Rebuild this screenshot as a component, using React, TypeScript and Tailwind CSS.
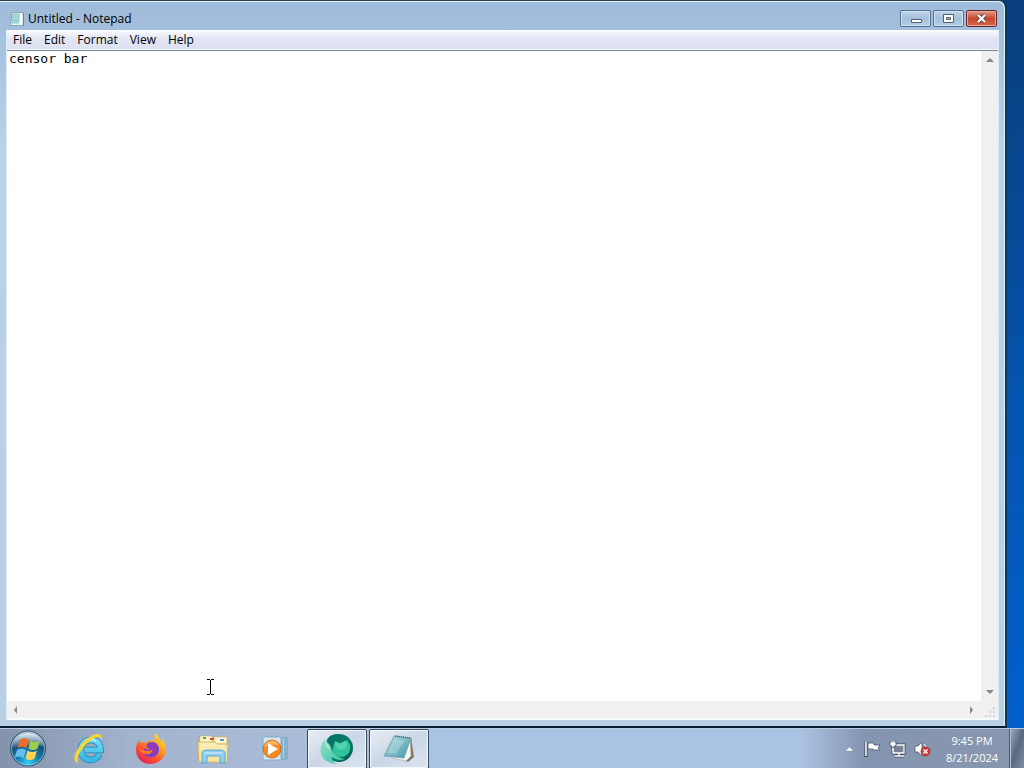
import type { ReactNode } from "react";

const menus = ["File", "Edit", "Format", "View", "Help"];

function NotepadGlyph() {
  return (
    <svg width="16" height="16" viewBox="0 0 16 16" aria-hidden="true">
      <path d="M3 1.500h11v13H1.500z" fill="#eaf4f4" stroke="#7d99a5" strokeWidth=".8" />
      <path d="M3.500 2.500h7.500L10 12.500H2.500z" fill="#96cdd0" />
      <path d="M11.500 2.500h2v11h-2z" fill="#fff" />
      <path d="M14.500 2v13" stroke="#71848d" />
      <path d="M4 5h6M4 7.500h5.500M3.500 10h6" stroke="#b9e2e1" strokeWidth=".8" />
    </svg>
  );
}

function StartOrb() {
  return (
    <svg width="40" height="40" viewBox="0 0 40 40" aria-hidden="true">
      <defs>
        <radialGradient id="orb" cx=".5" cy=".9" r=".85">
          <stop offset="0" stopColor="#31d0f4" />
          <stop offset=".38" stopColor="#147bb0" />
          <stop offset=".72" stopColor="#174b77" />
          <stop offset="1" stopColor="#8eacc2" />
        </radialGradient>
        <linearGradient id="orbShine" x1="0" y1="0" x2="0" y2="1">
          <stop offset="0" stopColor="#fff" stopOpacity=".75" />
          <stop offset="1" stopColor="#fff" stopOpacity=".08" />
        </linearGradient>
      </defs>
      <circle cx="20" cy="19.500" r="17.500" fill="url(#orb)" stroke="#304e69" />
      <circle cx="20" cy="19.500" r="16.500" fill="none" stroke="#c0dcec" strokeOpacity=".65" />
      <path d="M4 19C5 9 12 4 20 4s15 5 16 14c-9-3-20-3-32 1z" fill="url(#orbShine)" />
      <path d="M12 11c3-2.500 6-2 9 0l-2.500 8c-3-2-6-2-9 0z" fill="#ef692b" />
      <path d="M22.500 11.500c3 2 6 2 9.500 0l-2.500 8c-3 2-6 2-9 0z" fill="#9bd04c" />
      <path d="M9 21c3-2 6-2 9 0l-2.500 8c-3-2-6-2-9 0z" fill="#65bfee" />
      <path d="M19.500 21.500c3 2 6 2 9.500 0l-2.500 8c-3 2-6 2-9 0z" fill="#ffd34d" />
    </svg>
  );
}

function ExplorerE() {
  return (
    <svg width="34" height="34" viewBox="0 0 34 34" aria-hidden="true">
      <defs>
        <linearGradient id="ie" x1="0" y1="0" x2="0" y2="1">
          <stop offset="0" stopColor="#72daf8" />
          <stop offset="1" stopColor="#35b9e4" />
        </linearGradient>
      </defs>
      <path d="M27.500 22c-2 4-5 6-8.500 6-6 0-10-4-10-10S13 8 19 8s9.500 4 9.500 10H13" fill="none" stroke="#2382b2" strokeWidth="6.500" />
      <path d="M27.500 22c-2 4-5 6-8.500 6-6 0-10-4-10-10S13 8 19 8s9.500 4 9.500 10H13" fill="none" stroke="url(#ie)" strokeWidth="5" />
      <path d="M13 9c3-2 8-2 11 0" fill="none" stroke="#c6f3fd" strokeWidth="1.500" />
      <path d="M5 30C-1 27 7 13 17 6c6-4 12-5 12 0-2-3-7-1-11 2C10 14 4 23 5 30z" fill="#f5d831" stroke="#f5d831" strokeWidth="1.200" />
    </svg>
  );
}

function FirefoxLogo() {
  return (
    <svg width="34" height="34" viewBox="0 0 34 34" aria-hidden="true">
      <defs>
        <linearGradient id="fox" x1=".9" y1="0" x2=".2" y2="1">
          <stop offset="0" stopColor="#ffed3e" />
          <stop offset=".4" stopColor="#ff9b20" />
          <stop offset=".7" stopColor="#ff4c35" />
          <stop offset="1" stopColor="#df225e" />
        </linearGradient>
      </defs>
      <path d="M21 1c4 3 4 6 7 9 0-2 0-3-1-4 5 5 6 11 4 16-2 6-8 10-15 10C8 32 2 26 2 18c0-4 1-8 4-11v4c2-1 4-1 6 0 2-2 5-3 9-3-1-2-1-5 0-7z" fill="url(#fox)" />
      <path d="M14 11c6-3 11 1 11 6 0 6-5 9-10 8-5-1-7-5-4-9 1 2 4 2 5 1-3-1-5-3-2-6z" fill="#7542c9" />
      <path d="M4 17c4 0 5 2 9 2 3 0 5-2 7-1-1 4-5 5-8 4-3 0-5-2-8-5z" fill="#ff791f" />
      <path d="M15 12c4-1 7 1 7 5 0 3-3 5-6 5 4-4 3-7-1-10z" fill="#a632aa" />
    </svg>
  );
}

function FolderLogo() {
  return (
    <svg width="34" height="34" viewBox="0 0 34 34" aria-hidden="true">
      <path d="M3 5h12l2 2h14v21H3z" fill="#edd27a" stroke="#b8983e" strokeWidth=".8" />
      <path d="M4 4h12v7H4zM18 5h13v7H18z" fill="#fff5c7" stroke="#cdb46a" strokeWidth=".6" />
      <path d="M7 5h3v2H7z" fill="#49a75c" /><path d="M14 6h4v2h-4z" fill="#d74a39" /><path d="M24 7h4v2h-4z" fill="#4e9dd0" />
      <path d="M2 10h17l2 2h11l-1 18H3z" fill="#f8e59d" stroke="#d0b25a" strokeWidth=".8" />
      <path d="M4 12h15M4 14h25M4 17h25" stroke="#fff8d4" />
      <path d="M6 31V21c0-2 2-3 4-3h15c2 0 4 1 4 3v10h-5v-7H11v7z" fill="#90cfee" stroke="#4c9dcc" strokeWidth=".8" />
      <path d="M8 21h18" stroke="#d7f2fc" />
    </svg>
  );
}

function MediaLogo() {
  return (
    <svg width="30" height="30" viewBox="0 0 30 30" aria-hidden="true">
      <path d="M8 4h19v21H8z" fill="#b8d8e7" stroke="#6797b5" />
      <path d="M22 5v19M25 5v19" stroke="#4b8bb5" />
      <path d="M3 3h18v23H3z" fill="#d4e8f2" stroke="#83adc2" />
      <circle cx="12" cy="15" r="9" fill="#f58b22" stroke="#d46b15" />
      <path d="M4 13a8 8 0 0 1 15-2c-5-1-10-1-15 2z" fill="#ffbd68" opacity=".8" />
      <path d="m8 9 10 6-10 6z" fill="#fff" />
    </svg>
  );
}

function GreenLogo() {
  return (
    <svg width="36" height="36" viewBox="0 0 36 36" aria-hidden="true">
      <defs>
        <linearGradient id="globe" x1="0" y1="0" x2="1" y2="1">
          <stop stopColor="#087064" /><stop offset=".6" stopColor="#087b6b" /><stop offset="1" stopColor="#044c45" />
        </linearGradient>
        <linearGradient id="mint" x1="0" y1="0" x2="1" y2="1"><stop stopColor="#93dfc9" /><stop offset="1" stopColor="#30c5a0" /></linearGradient>
      </defs>
      <circle cx="20" cy="17" r="14" fill="url(#globe)" />
      <path d="M8 7C0 12 0 23 5 28c3 3 7 4 12 5-3-2-4-4-4-7 4 3 9 4 13 2-6-1-11-4-13-9-2-4-3-7-2-11z" fill="url(#mint)" />
      <path d="m16 10 5 2 7-3 3 5c1 6-2 11-8 12-6 0-10-4-9-9z" fill="#31c49d" />
      <path d="M7 10c3-5 8-8 14-6l3 4-4 3-5-2-2 7-4-4z" fill="#087366" />
      <path d="m16 11 5 2 6-3c2 4 0 8-4 9-4 0-7-3-7-8z" fill="#78dfc2" opacity=".5" />
      <path d="M8 7c-2 4-1 8 3 11" fill="none" stroke="#b8ead8" strokeWidth="1.500" />
    </svg>
  );
}

function LargeNotepad() {
  return (
    <svg width="34" height="34" viewBox="0 0 34 34" aria-hidden="true">
      <defs><linearGradient id="pad" x1="0" y1="0" x2="1" y2="1"><stop stopColor="#b9e0e5" /><stop offset=".55" stopColor="#75b6c3" /><stop offset="1" stopColor="#4896a9" /></linearGradient></defs>
      <path d="m29 5 3 20-6 5-6-3z" fill="#817969" />
      <path d="m28 5 1 19-5 5-14-3 2-3z" fill="#f6f5ed" stroke="#a7adab" strokeWidth=".6" />
      <path d="M12 4 29 6l-7 20L2 24z" fill="url(#pad)" stroke="#699ba5" strokeWidth=".7" />
      <path d="m13 4 15 2" stroke="#59666b" strokeWidth="1.500" strokeDasharray="1 1" />
      <path d="m13 7 10 1-9 14-9-1z" fill="#d8f2f2" opacity=".3" />
    </svg>
  );
}

function TaskButton({ label, active = false, children }: { label: string; active?: boolean; children: ReactNode }) {
  return (
    <button aria-label={label} className={active
      ? "flex h-10 w-15 items-center justify-center rounded-xs border border-[#354a61] bg-linear-to-br from-[#e9edf4] via-[#cbd7e6] to-[#dce5f0] shadow-[inset_0_0_0_1px_#f4f8fc]"
      : "flex h-10 w-15 items-center justify-center"}>
      {children}
    </button>
  );
}

function Arrow({ direction }: { direction: "up" | "down" | "left" | "right" }) {
  const paths = { up: "M0 6 4 2l4 4z", down: "M0 2h8L4 6z", left: "M5 0v8L2 4z", right: "M2 0l3 4-3 4z" };
  return <svg width="8" height="8" viewBox="0 0 8 8" aria-hidden="true"><path d={paths[direction]} fill="#85878c" /></svg>;
}

const captionButton = "flex h-[17px] w-[31px] items-center justify-center rounded-xs border border-[#52708f] bg-linear-to-b from-[#bfd3e8] via-[#a4bfdb] to-[#b5d0e8] shadow-[inset_0_0_0_1px_#d3e3f1]";

export default function App() {
  return (
    <div className="relative flex h-screen flex-col overflow-hidden bg-linear-to-b from-[#083e7b] via-[#0453ad] via-50% to-[#0261d0] font-['Open_Sans','Noto_Sans',sans-serif] text-xs text-black">
      <main className="mr-[17px] flex min-h-0 flex-1 flex-col rounded-tr-lg border-t border-r-2 border-b-2 border-t-[#343b4a] border-r-[#173451] border-b-[#0b1d30] bg-linear-to-b from-[#9fbbda] via-[#b9d1ea] via-20% to-[#b9cfe4] pr-[6px] pb-[6px] pl-[6px] shadow-[inset_-1px_1px_0_#d5f5ff]">
        <header className="flex h-[29px] shrink-0 items-center pt-[6px] pr-[2px] pl-[3px]">
          <NotepadGlyph />
          <h1 className="ml-[3px] flex-1 text-xs leading-4">Untitled - Notepad</h1>
          <div className="flex gap-[2px]">
            <button aria-label="Minimize" className={captionButton}>
              <svg width="14" height="10" viewBox="0 0 14 10"><path d="M2.500 5.500h10v3h-10z" fill="#fff" stroke="#53606e" /></svg>
            </button>
            <button aria-label="Restore" className={captionButton}>
              <svg width="13" height="11" viewBox="0 0 13 11"><path d="M1.500 1.500h10v8h-10zM4.500 4.500v2h4v-2z" fill="#fff" fillRule="evenodd" stroke="#53606e" /></svg>
            </button>
            <button aria-label="Close" className="flex h-[17px] w-[31px] items-center justify-center rounded-xs border border-[#61262c] bg-linear-to-b from-[#e09a88] via-[#c9462f] to-[#d5664e] shadow-[inset_0_0_0_1px_#e7aa99]">
              <svg width="13" height="11" viewBox="0 0 13 11"><path d="m3 2 7 7m0-7L3 9" stroke="#65434b" strokeWidth="4" /><path d="m3 2 7 7m0-7L3 9" stroke="#fff" strokeWidth="2.200" /></svg>
            </button>
          </div>
        </header>
        <section className="flex min-h-0 flex-1 flex-col border-r border-l border-[#dceef9] bg-white">
          <nav className="flex h-5 shrink-0 items-center bg-linear-to-b from-[#fcfdff] via-[#e3e7f4] via-40% to-[#dce1f1] shadow-[inset_0_-1px_0_#f6f8fe]">
            {menus.map((item) => <button key={item} className="px-[6px] leading-5">{item}</button>)}
          </nav>
          <div className="flex min-h-0 flex-1 border-t border-[#72869e]">
            <textarea aria-label="Text editor" spellCheck={false} wrap="off" defaultValue="censor bar" className="min-w-0 flex-1 resize-none overflow-hidden bg-white px-[2px] font-['DejaVu_Sans_Mono','Liberation_Mono',monospace] text-[13px] leading-4 outline-none" />
            <div className="flex w-[17px] shrink-0 flex-col items-center justify-between bg-[#f1f0f1] py-[5px]">
              <button aria-label="Scroll up"><Arrow direction="up" /></button>
              <button aria-label="Scroll down"><Arrow direction="down" /></button>
            </div>
          </div>
          <div className="flex h-[17px] shrink-0 items-center bg-[#f2eff0]">
            <div className="flex flex-1 items-center justify-between px-[5px]">
              <button aria-label="Scroll left"><Arrow direction="left" /></button>
              <button aria-label="Scroll right"><Arrow direction="right" /></button>
            </div>
            <svg width="17" height="17" viewBox="0 0 17 17" aria-hidden="true"><path d="M12 6h2v2h-2zM8 10h2v2H8zM12 10h2v2h-2zM4 14h2v2H4zM8 14h2v2H8zM12 14h2v2h-2z" fill="#d5d9dd" /></svg>
          </div>
          <div className="h-[2px] shrink-0 bg-[#f2fbff]" />
        </section>
      </main>

      <footer className="flex h-10 shrink-0 items-stretch border-t border-[#b9cbdf] bg-linear-to-r from-[#8494ad] via-[#a8bfdf] via-25% to-[#a9c2df]">
        <div className="flex items-center gap-[2px] bg-linear-to-r from-[#8393ac] via-[#a2b3cd] via-30% to-[#afc3df] px-px">
          <button aria-label="Start" className="flex h-10 w-14 items-center justify-center pr-[2px]"><StartOrb /></button>
          <TaskButton label="Internet Explorer"><ExplorerE /></TaskButton>
          <TaskButton label="Firefox"><FirefoxLogo /></TaskButton>
          <TaskButton label="File Explorer"><FolderLogo /></TaskButton>
          <TaskButton label="Media Player"><MediaLogo /></TaskButton>
          <TaskButton label="Web browser" active><GreenLogo /></TaskButton>
          <TaskButton label="Notepad" active><LargeNotepad /></TaskButton>
        </div>
        <div className="flex-1 bg-[#abc3e2]" />
        <div className="flex items-center bg-linear-to-r from-[#abc3e2] via-[#8495b2] via-30% to-[#8797af] pl-11 text-white">
          <button aria-label="Show hidden icons" className="mr-[10px]">
            <svg width="9" height="8" viewBox="0 0 9 8"><path d="m.5 6 4-4 4 4z" fill="#fff" stroke="#66758d" strokeWidth=".3" /></svg>
          </button>
          <div className="flex items-center gap-2">
            <button aria-label="Action Center">
              <svg width="17" height="18" viewBox="0 0 17 18"><path d="M2 2v15" stroke="#39465a" strokeWidth="3" /><path d="M2 2v14" stroke="#fff" strokeWidth="1.500" /><path d="M4 3h6v2h6l-2 3 2 2H9V9H4z" fill="#fff" stroke="#46536a" strokeWidth=".8" /></svg>
            </button>
            <button aria-label="Network">
              <svg width="17" height="18" viewBox="0 0 17 18"><path d="M4 5h11v8H4zM10 13v3M6 16h9" fill="#6f7c91" stroke="#3e4a5c" strokeWidth="3" /><path d="M4 5h11v8H4zM10 13v3M6 16h9" fill="#77849a" stroke="#fff" strokeWidth="1.300" /><path d="M1 2h6v4H5v2H3V6H1z" fill="#fff" stroke="#45526a" strokeWidth=".8" /><path d="M3 1v2M5 1v2M4 8v3" stroke="#fff" /></svg>
            </button>
            <button aria-label="Volume muted">
              <svg width="17" height="18" viewBox="0 0 17 18"><path d="M1 6h3l4-4v14l-4-4H1z" fill="#fff" stroke="#4c596d" strokeWidth=".8" /><path d="M10 4c3 3 3 7 0 10" fill="none" stroke="#fff" /><circle cx="11.500" cy="11.500" r="4.500" fill="#d33b35" stroke="#9d3030" strokeWidth=".8" /><path d="m9.500 9.500 4 4m0-4-4 4" stroke="#fff" strokeWidth="1.400" /></svg>
            </button>
          </div>
          <button aria-label="Clock" className="w-[78px] pl-1 text-center text-[11px] leading-[17px] text-white">
            <time dateTime="2024-08-21T21:45"><span className="block">9:45 PM</span><span className="block">8/21/2024</span></time>
          </button>
        </div>
        <button aria-label="Show desktop" className="w-[15px] border-l border-[#495b71] bg-linear-to-br from-[#a0acbc] via-[#58697f] to-[#8190a4] shadow-[inset_1px_0_0_#b4c1cf]" />
      </footer>
      <svg className="pointer-events-none absolute top-[679px] left-[206px]" width="9" height="16" viewBox="0 0 9 16" aria-hidden="true"><path d="M1 .5h3M5 .5h3M4.500 1v14M1 15.500h3M5 15.500h3" fill="none" stroke="#000" /></svg>
    </div>
  );
}
